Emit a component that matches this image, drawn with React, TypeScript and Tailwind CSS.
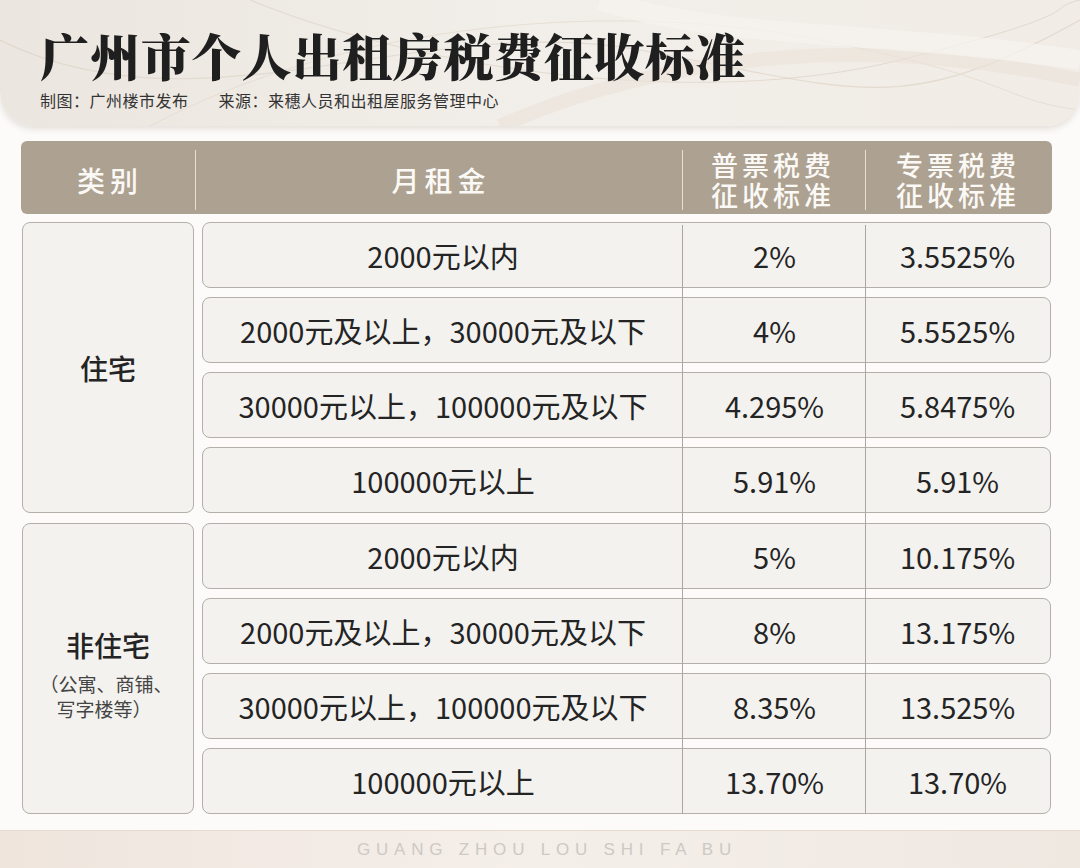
import React from "react";

const rowsA = [
  ["2000元以内", "2%", "3.5525%"],
  ["2000元及以上，30000元及以下", "4%", "5.5525%"],
  ["30000元以上，100000元及以下", "4.295%", "5.8475%"],
  ["100000元以上", "5.91%", "5.91%"],
];
const rowsB = [
  ["2000元以内", "5%", "10.175%"],
  ["2000元及以上，30000元及以下", "8%", "13.175%"],
  ["30000元以上，100000元及以下", "8.35%", "13.525%"],
  ["100000元以上", "13.70%", "13.70%"],
];

const font = { fontFamily: '"Noto Sans CJK SC", "Noto Sans", sans-serif' };

function Row({ r }: { r: string[] }) {
  return (
    <div className="h-[66px] rounded-[8px] border-[1.5px] border-[#b3afa9] bg-[#f3f2ef] grid grid-cols-[480px_183px_183px] items-center text-[29px] text-[#242424] leading-none">
      <div className="text-center">{r[0]}</div>
      <div className="text-center">{r[1]}</div>
      <div className="text-center">{r[2]}</div>
    </div>
  );
}

function Group({ rows, children, pad }: { rows: string[][]; children: React.ReactNode; pad?: string }) {
  return (
    <div className="flex gap-[8px]">
      <div className={"w-[172px] rounded-[8px] border-[1.5px] border-[#b3afa9] bg-[#f3f2ef] flex flex-col items-center justify-center text-[#242424] " + (pad ?? "")}>
        {children}
      </div>
      <div className="w-[849px] flex flex-col gap-[9px]">
        {rows.map((r, i) => (
          <Row key={i} r={r} />
        ))}
      </div>
    </div>
  );
}

export default function App() {
  return (
    <div className="w-[1080px] h-[868px] bg-[#fcfbfa] overflow-hidden flex flex-col" style={font}>
      {/* Header card */}
      <div className="relative h-[126px] rounded-b-[34px] bg-gradient-to-r from-[#ebe6df] via-[#f2eee9] to-[#f1ece6] shadow-[0_3px_6px_rgba(120,100,80,0.18)] overflow-hidden">
        <svg className="absolute inset-0" width="1080" height="126" viewBox="0 0 1080 126" fill="none">
          <path d="M0 40 C 200 140, 420 10, 640 50 S 900 120, 1080 20" stroke="#ddd3c6" strokeWidth="1.2" opacity="0.7" />
          <path d="M150 126 C 350 20, 620 0, 820 40 S 1000 100, 1080 110" stroke="#e2d9cc" strokeWidth="1" opacity="0.7" />
          <path d="M250 0 C 420 70, 700 110, 900 60 S 1040 10, 1080 0" stroke="#d8cdbf" strokeWidth="1" opacity="0.6" />
          <path d="M500 126 C 650 60, 850 30, 1080 80" stroke="#ebe3d8" strokeWidth="14" opacity="0.6" />
          <path d="M600 0 C 720 40, 880 30, 1080 60" stroke="#f7f4f0" strokeWidth="20" opacity="0.7" />
        </svg>
        <div className="relative pl-[40px] pt-[27px]">
          <div className="text-[50px] leading-[54px] font-black text-[#1f1f1f] tracking-[0.4px]" style={{ fontFamily: '"Noto Serif CJK SC", "Noto Sans CJK SC", serif' }}>
            广州市个人出租房税费征收标准
          </div>
          <div className="mt-[9px] flex text-[16px] leading-[20px] text-[#333] tracking-[0.5px]">
            <span>制图：广州楼市发布</span>
            <span className="ml-[30px]">来源：来穗人员和出租屋服务管理中心</span>
          </div>
        </div>
      </div>

      {/* Table header */}
      <div className="mt-[15px] ml-[21px] w-[1031px] h-[73px] rounded-[6px] bg-[#ada191] grid grid-cols-[174px_487px_183px_187px] text-[#fbf9f6] text-[28px] font-medium">
        <div className="flex items-center justify-center tracking-[5px] pl-[4px] leading-[34px]">类别</div>
        <div className="my-[9px] border-l border-[#e6dfd6] flex items-center justify-center tracking-[5px] pl-[4px] leading-[34px]">月租金</div>
        <div className="my-[9px] border-l border-[#e6dfd6] flex flex-col items-center justify-center text-[27px] leading-[30px] tracking-[4px] pr-[2px]">
          <span className="block h-[30px]">普票税费</span>
          <span className="block h-[30px]">征收标准</span>
        </div>
        <div className="my-[9px] border-l border-[#e6dfd6] flex flex-col items-center justify-center text-[27px] leading-[30px] tracking-[4px] pr-[2px]">
          <span className="block h-[30px]">专票税费</span>
          <span className="block h-[30px]">征收标准</span>
        </div>
      </div>

      {/* Body */}
      <div className="relative mt-[8px] ml-[22px] flex flex-col gap-[10px]">
        <Group rows={rowsA}>
          <div className="text-[28px] font-medium leading-none">住宅</div>
        </Group>
        <Group rows={rowsB} pad="pt-[14px]">
          <div className="text-[28px] font-medium leading-none">非住宅</div>
          <div className="mt-[12px] text-[19px] leading-[25px] text-[#444] text-center">
            <div className="-ml-[4px]">（公寓、商铺、</div>
            <div className="-ml-[8px]">写字楼等）</div>
          </div>
        </Group>
        <div className="absolute top-[3px] bottom-0 left-[660px] w-px bg-[#aaa6a0]" />
        <div className="absolute top-[3px] bottom-0 left-[843px] w-px bg-[#aaa6a0]" />
      </div>

      {/* Footer */}
      <div className="mt-[16px] h-[38px] border-t border-[#e6dbd1] bg-gradient-to-r from-[#efe5dd] via-[#f5efea] to-[#efe8e1] flex items-center">
        <span className="ml-[357px] text-[17px] tracking-[5.8px] text-[#cdc9c4]" style={{ fontFamily: '"Liberation Sans", Arial, sans-serif' }}>
          GUANG ZHOU LOU SHI FA BU
        </span>
      </div>
    </div>
  );
}
